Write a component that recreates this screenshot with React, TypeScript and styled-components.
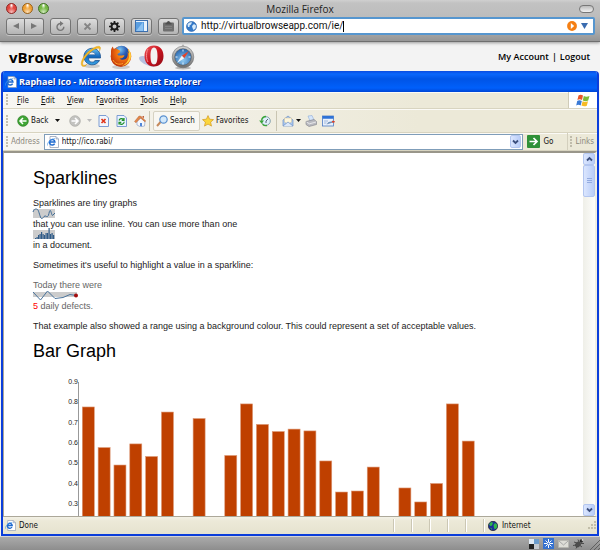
import React from "react";
import styled, { createGlobalStyle, css } from "styled-components";

const TAHOMA = `"DejaVu Sans Condensed", "DejaVu Sans", sans-serif`;
const HUMANIST = `"Open Sans", "Noto Sans", sans-serif`;
const ARIAL = `"Liberation Sans", Arial, sans-serif`;

const Global = createGlobalStyle`
  *, *::before, *::after { box-sizing: border-box; }
  body { margin: 0; background: #999; }
  button, input { font: inherit; color: inherit; margin: 0; padding: 0; border: 0; background: none; outline: 0; }
  svg { display: block; flex: none; }
  a { color: inherit; text-decoration: none; }
  h1, h2, p { margin: 0; }
`;

/* ---------- outer browser ---------- */

const Browser = styled.div`
  display: flex;
  flex-direction: column;
  height: 100vh;
  background: #f3f3f3;
  font-family: ${HUMANIST};
`;

const Chrome = styled.header`
  background: linear-gradient(#d0d0d0 0, #c2c2c2 3px, #bdbdbd 16px, #a9a9a9 32px, #979797 40px);
  border-bottom: 1px solid #6f6f6f;
  box-shadow: 0 1px 3px #999;
  position: relative;
  z-index: 1;
`;

const TitleRow = styled.div`
  display: grid;
  grid-template-columns: 1fr auto 1fr;
  align-items: center;
  height: 17px;
  padding: 0 6px;
  font-size: 10px;
  font-weight: 500;
  color: #222;
`;

const Lights = styled.div`
  display: flex;
  gap: 5px;
`;

const Light = styled.button<{ $tone: string; $edge: string }>`
  width: 11px;
  height: 11px;
  border-radius: 50%;
  border: 1px solid ${(p) => p.$edge};
  background: radial-gradient(ellipse at 50% 15%, #fff 0, transparent 35%),
    radial-gradient(circle at 50% 90%, #ffffffaa 0, transparent 50%), ${(p) => p.$tone};
`;

const Pill = styled.button`
  justify-self: end;
  width: 15px;
  height: 8px;
  border: 1px solid #777;
  border-radius: 4px;
  background: linear-gradient(#bbb, #f2f2f2);
`;

const NavRow = styled.div`
  display: flex;
  align-items: center;
  gap: 3px;
  height: 24px;
  padding: 0 5px 6px 6px;
`;

const NavGroup = styled.div`
  display: flex;
  gap: 6px;
`;

const macButton = css`
  display: flex;
  align-items: center;
  justify-content: center;
  height: 17px;
  border: 1px solid #747474;
  background: linear-gradient(#dcdcdc, #b4b4b4);
  box-shadow: 0 1px 0 #c4c4c4;
`;

const NavPair = styled.div`
  display: flex;
`;

const NavButton = styled.button<{ $join?: "left" | "right" }>`
  ${macButton}
  width: ${(p) => (p.$join ? 19 : 21)}px;
  border-radius: ${(p) => (p.$join === "left" ? "3px 0 0 3px" : p.$join === "right" ? "0 3px 3px 0" : "3px")};
  ${(p) => p.$join === "right" && "border-left: 0;"}
`;

const UrlBox = styled.label`
  display: flex;
  flex: 1;
  align-items: center;
  gap: 4px;
  height: 18px;
  padding: 0 5px 0 2px;
  border: 2px solid #5696cf;
  border-radius: 2px;
  background: #fff;
  font-family: Roboto, ${HUMANIST};
  font-size: 10px;
  color: #111;
`;

const UrlInput = styled.input`
  field-sizing: content;
  line-height: 14px;
`;

const Caret = styled.span`
  flex: none;
  width: 1px;
  height: 11px;
  margin-left: -4px;
  background: #000;
`;

const Spacer = styled.span`
  flex: 1;
`;

const IconButton = styled.button`
  display: flex;
  align-items: center;
`;

const AppBar = styled.div`
  display: flex;
  align-items: center;
  justify-content: space-between;
  height: 29px;
  padding: 0 10px 0 9px;
  color: #000;
`;

const Brand = styled.div`
  display: flex;
  align-items: center;
  gap: 6px;
  font-size: 15px;
  font-weight: 700;
  line-height: 24px;
`;

const Engines = styled.nav`
  display: flex;
  gap: 6px;
`;

const Account = styled.nav`
  display: flex;
  gap: 3px;
  font-size: 9px;
  font-weight: 600;
`;

const BrowserStatus = styled.footer`
  display: flex;
  flex: none;
  align-items: center;
  justify-content: flex-end;
  gap: 4px;
  height: 14px;
  border-top: 1px solid #d5d5d5;
  background: linear-gradient(#aaa, #8d8d8d);
`;

/* ---------- inner window ---------- */

const Window = styled.section`
  display: flex;
  flex: 1;
  flex-direction: column;
  min-height: 0;
  margin: 0 1px;
  border: solid #0b3edb;
  border-width: 0 2px 2px;
  border-radius: 4px 4px 0 0;
  background: #ece9d8;
  font-family: ${TAHOMA};
  font-size: 8px;
  color: #111;
  overflow: hidden;
`;

const WindowTitle = styled.div`
  display: flex;
  flex: none;
  align-items: center;
  gap: 2px;
  height: 21px;
  padding: 0 2px;
  background: linear-gradient(#0a4be0 0, #0a67fb 3px, #0054e6 8px, #0060fb 17px, #0046d5 21px);
  font-family: ${HUMANIST};
  font-size: 9px;
  font-weight: 700;
  color: #fff;
  text-shadow: 1px 1px 0 #0a2a8c;
`;

const Bar = styled.div<{ $h: number }>`
  display: flex;
  flex: none;
  align-items: center;
  height: ${(p) => p.$h}px;
  padding-left: 3px;
  border-bottom: 1px solid #d8d4c0;
  background: linear-gradient(90deg, #f7f6f2, #ece9d8 70%);
  box-shadow: inset 0 1px 0 #fbfaf6;
`;

const Grip = styled.span`
  flex: none;
  width: 2px;
  height: 12px;
  background: repeating-linear-gradient(#b5b1a0 0 2px, transparent 2px 3px);
  opacity: 0.8;
`;

const Menu = styled.div`
  display: flex;
  flex: 1;
  gap: 12px;
  padding-left: 9px;
`;

const Flag = styled.div`
  display: flex;
  align-items: center;
  justify-content: center;
  width: 29px;
  height: 100%;
  border-left: 1px solid #cfcbb8;
  background: #fff;
`;

const Tools = styled.div`
  display: flex;
  align-items: center;
  padding-left: 7px;
`;

const Tool = styled.button<{ $w: number; $hot?: boolean }>`
  display: flex;
  align-items: center;
  gap: 2px;
  width: ${(p) => p.$w}px;
  height: 20px;
  padding-left: 2px;
  white-space: nowrap;
  ${(p) => p.$hot && "background: #f8f7f2; border: 1px solid #d6d2c2; border-radius: 2px;"}
`;

const Rule = styled.span`
  width: 1px;
  height: 20px;
  margin-right: 3px;
  background: #c9c5b2;
`;

const AddressField = styled.label`
  display: flex;
  flex: 1;
  align-items: center;
  gap: 4px;
  color: #8b887c;
  padding-left: 3px;
`;

const AddressBox = styled.span`
  display: flex;
  flex: 1;
  align-items: center;
  gap: 3px;
  height: 16px;
  padding: 0 1px 0 2px;
  border: 1px solid #7f9db9;
  background: #fff;
  color: #111;
`;

const AddressInput = styled.input`
  flex: 1;
  min-width: 0;
`;

const blueKnob = css`
  display: flex;
  align-items: center;
  justify-content: center;
  border: 1px solid #b3c6f0;
  border-radius: 2px;
  background: linear-gradient(90deg, #dbe6fe, #b9cdf8);
`;

const DropButton = styled.button`
  ${blueKnob}
  width: 11px;
  height: 13px;
`;

const GoButton = styled.button`
  display: flex;
  align-items: center;
  gap: 4px;
  width: 40px;
  margin-left: 4px;
`;

const Links = styled.div`
  display: flex;
  align-items: center;
  gap: 4px;
  height: 100%;
  padding: 0 3px 0 2px;
  border-left: 1px solid #d3cfbd;
  color: #8b887c;
`;

const Viewport = styled.div`
  display: flex;
  flex: 1;
  min-height: 0;
  border-top: 2px solid #99968a;
  border-left: 1px solid #aca899;
  border-bottom: 1px solid #aca899;
  border-right: 2px solid #f1efe2;
  background: #fff;
`;

const Document = styled.main`
  flex: 1;
  min-width: 0;
  overflow: hidden;
  padding: 15px 29px 0;
  font-family: ${ARIAL};
  font-size: 9px;
  line-height: 10px;
  color: #1c1a22;
`;

const Heading = styled.h1`
  margin-bottom: 10px;
  font-size: 18px;
  font-weight: 400;
  line-height: 20px;
  color: #000;
`;

const Paragraph = styled.p<{ $muted?: boolean }>`
  margin-bottom: 10px;
  ${(p) => p.$muted && "color: #666;"}
  svg { height: 11px; overflow: visible; }
`;

const Alert = styled.span`
  color: #f00;
`;

const ScrollTrack = styled.div`
  display: flex;
  flex-direction: column;
  justify-content: space-between;
  width: 12px;
  background: linear-gradient(90deg, #efefe8, #fdfdfb);
`;

const ScrollButton = styled.button<{ $h: number }>`
  ${blueKnob}
  width: 12px;
  height: ${(p) => p.$h}px;
`;

const StatusBar = styled.div`
  display: flex;
  flex: none;
  align-items: center;
  height: 17px;
  background: linear-gradient(#f3f1e6, #ece9d8 4px, #e6e3cf);
`;

const StatusMain = styled.div`
  display: flex;
  flex: 1;
  align-items: center;
  gap: 3px;
  padding-left: 2px;
`;

const Pane = styled.span<{ $w: number }>`
  display: flex;
  align-items: center;
  justify-content: flex-start;
  gap: 4px;
  width: ${(p) => p.$w}px;
  height: 13px;
  padding-left: 4px;
  border-left: 1px solid #cbc7b4;
  box-shadow: inset 1px 0 0 #fff;
`;

/* ---------- icons ---------- */

const Tri = ({ dir }: { dir: "l" | "r" }) => (
  <svg width="8" height="8" viewBox="0 0 8 8">
    <path d={dir === "l" ? "M7 1v6L1 4z" : "M1 1v6l6-3z"} fill="#777" />
  </svg>
);

const DownArrow = ({ color = "#111" }: { color?: string }) => (
  <svg width="5" height="3" viewBox="0 0 5 3">
    <path d="M0 0h5L2.500 3z" fill={color} />
  </svg>
);

const Chevron = ({ up }: { up?: boolean }) => (
  <svg width="7" height="6" viewBox="0 0 7 6">
    <path d={up ? "M1 4.500l2.500-2.500L6 4.500" : "M1 1.500L3.500 4 6 1.500"} fill="none" stroke="#3c4f7d" strokeWidth="1.800" />
  </svg>
);

const Globe = () => (
  <svg width="11" height="11" viewBox="0 0 11 11">
    <circle cx="5.500" cy="5.500" r="5" fill="#3479c9" stroke="#2a5fa6" strokeWidth=".6" />
    <path d="M1.500 3.500C3 1 5 .8 6 1.500L5 3.500 3.500 4.500 3.500 6 2 6zM6 5l2-2 2 1.500-.5 3L7.500 9 6.500 7z" fill="#d8ebfb" />
  </svg>
);

const PageE = ({ size = 12 }: { size?: number }) => (
  <svg width={size} height={size} viewBox="0 0 12 12">
    <path d="M3 .5h6l2.500 2.500v8.500H3z" fill="#fff" stroke="#8a97ad" strokeWidth=".7" />
    <path d="M9 .5v2.500h2.500" fill="#cdd8ea" stroke="#8a97ad" strokeWidth=".6" />
    <path d="M7.600 7.600A2.700 2.700 0 1 1 7.900 6H2.800" fill="none" stroke="#1f6bd0" strokeWidth="1.500" />
    <path d="M.4 9.500C0 6.500 4 2.800 8 2.600" fill="none" stroke="#4b9bea" strokeWidth=".7" />
  </svg>
);

const IeLogo = () => (
  <svg width="24" height="26" viewBox="0 0 24 26">
    <defs>
      <linearGradient id="ieBlue" x1="0" y1="0" x2="0" y2="1">
        <stop offset="0" stopColor="#6cc3f2" />
        <stop offset=".5" stopColor="#1669bd" />
        <stop offset="1" stopColor="#3aa6e8" />
      </linearGradient>
    </defs>
    <ellipse cx="13" cy="22" rx="8" ry="2" fill="#ccc" />
    <path d="M20.500 16.500A8.300 8.300 0 1 1 21.500 12.500V14H9.500a3.600 3.600 0 0 0 6.600 2.500z" fill="url(#ieBlue)" stroke="#0e4585" strokeWidth=".7" />
    <path d="M9.500 10.800a3.600 3.600 0 0 1 7 0z" fill="#f3f3f3" stroke="#0e4585" strokeWidth=".5" />
    <path d="M5 22.500C-1 22.500 3.500 12 10 7c6-5 12-6.500 11.500-2.500-.2 1.200-.7 2-1.200 3C22 2.500 16.500 4 11.500 8 5.500 13 1.500 21 5 21.200c1 0 2-.5 3-1-1 1.300-2 2.300-3 2.300z" fill="#f5b822" stroke="#c88a0c" strokeWidth=".3" />
  </svg>
);

const FirefoxLogo = () => (
  <svg width="24" height="26" viewBox="0 0 24 26">
    <defs>
      <radialGradient id="foxBody" cx=".65" cy=".3" r=".8">
        <stop offset="0" stopColor="#ffb01c" />
        <stop offset=".5" stopColor="#ec6a10" />
        <stop offset="1" stopColor="#b92c08" />
      </radialGradient>
      <radialGradient id="foxGlobe" cx=".4" cy=".25" r=".8">
        <stop offset="0" stopColor="#7cc6f2" />
        <stop offset=".5" stopColor="#2a5fb8" />
        <stop offset="1" stopColor="#142e82" />
      </radialGradient>
    </defs>
    <ellipse cx="12" cy="23" rx="9" ry="2" fill="#ccc" />
    <circle cx="12" cy="12.500" r="10.300" fill="url(#foxBody)" />
    <circle cx="12.500" cy="9.500" r="7.700" fill="url(#foxGlobe)" />
    <path d="M2 7C2 5 3 3 4 2.500c0 1 .5 2 1 2.500 2-.5 3.500 0 4.500 1C11 6 11.500 7 11 8c-.5 1-2 1.500-2.500 2 0 1 1 1.500 2.500 1.500 1.500.5 3-1 4.500 0-1 2-3 3.500-5 3 2 2 6 1.500 7.500-1 1-2 1-4 .5-5.500 2 1 2.500 4 2.500 6a9 9 0 0 1-9 8.500c-6 0-10-4-10-9.500z" fill="url(#foxBody)" />
    <path d="M19 5c1.500 1 3 4 3 7 0 5-4 9-9 10 4-2 6.500-5 7-9 .2-3-.2-5.500-1-8z" fill="#ffcf3c" />
    <path d="M4 16c2 4 6 5 10 3.500" fill="none" stroke="#ffa42c" strokeWidth="1" />
  </svg>
);

const OperaLogo = () => (
  <svg width="26" height="26" viewBox="0 0 26 26">
    <defs>
      <linearGradient id="operaRed" x1="0" y1="0" x2="1" y2="1">
        <stop offset="0" stopColor="#f0555a" />
        <stop offset=".5" stopColor="#c9141f" />
        <stop offset="1" stopColor="#8f0a14" />
      </linearGradient>
    </defs>
    <path d="M8 13C4 11 0 12 0 14c0 4 8 8 15 9l1-3C12 20 10 18 8 13z" fill="#aab6dc" opacity=".85" />
    <path fillRule="evenodd" d="M15 1.500c6 0 9.500 4.500 9.500 10.500S21 22.500 15 22.500 5.500 18 5.500 12 9 1.500 15 1.500zm0 2c-2.500 0-3.500 3.500-3.500 8.500s1 8.500 3.500 8.500 3.500-3.500 3.500-8.500-1-8.500-3.500-8.500z" fill="url(#operaRed)" />
    <path d="M9 5C7 8 7 15 9 18" fill="none" stroke="#f48a8c" strokeWidth="1" />
  </svg>
);

const SafariLogo = () => (
  <svg width="24" height="26" viewBox="0 0 24 26">
    <defs>
      <linearGradient id="safariRim" x1="0" y1="0" x2="0" y2="1">
        <stop offset="0" stopColor="#d8d8d8" />
        <stop offset="1" stopColor="#6e6e6e" />
      </linearGradient>
      <radialGradient id="safariFace" cx=".5" cy=".7" r=".7">
        <stop offset="0" stopColor="#8fc9f0" />
        <stop offset="1" stopColor="#2463ad" />
      </radialGradient>
    </defs>
    <ellipse cx="12" cy="24" rx="8" ry="1.500" fill="#bbb" />
    <circle cx="12" cy="1.800" r="1.200" fill="#bbb" />
    <circle cx="12" cy="13" r="10.800" fill="url(#safariRim)" stroke="#777" strokeWidth=".6" />
    <circle cx="12" cy="13" r="8.300" fill="url(#safariFace)" stroke="#555" strokeWidth=".6" />
    <path d="M12 5.500v2M12 18.500v2M4.500 13h2M17.500 13h2" stroke="#e6f2fc" strokeWidth="1" />
    <path d="M18 7l-4.800 7.200-2.400-2.400z" fill="#e2442b" />
    <path d="M6 19l4.800-7.200 2.400 2.400z" fill="#f4f6f8" />
  </svg>
);

const ReloadIcon = () => (
  <svg width="11" height="11" viewBox="0 0 11 11">
    <path d="M8.800 5.800A3.400 3.400 0 1 1 5.800 2.600" fill="none" stroke="#777" strokeWidth="1.400" />
    <path d="M5 0l3.500 2.600L5 5.200z" fill="#777" />
  </svg>
);

const CrossIcon = () => (
  <svg width="9" height="9" viewBox="0 0 9 9">
    <path d="M1.500 1.500l6 6m0-6l-6 6" stroke="#858585" strokeWidth="1.800" />
  </svg>
);

const GearIcon = () => (
  <svg width="13" height="13" viewBox="0 0 13 13">
    <circle cx="6.500" cy="6.500" r="3" fill="none" stroke="#1c1c1c" strokeWidth="2" />
    <path d="M6.500 1v2M6.500 10v2M1 6.500h2M10 6.500h2M2.600 2.600L4 4M9 9l1.400 1.400M2.600 10.400L4 9M9 4l1.400-1.400" stroke="#1c1c1c" strokeWidth="1.700" />
  </svg>
);

const SidebarIcon = () => (
  <svg width="13" height="12" viewBox="0 0 13 12">
    <rect x=".5" y=".5" width="12" height="11" fill="#5a9ee0" stroke="#3c6fae" />
    <path d="M1 1h11v1H1zM9 2h3v9H9z" fill="#e8f2fc" />
    <path d="M1 11l7-9v9z" fill="#8cc2f2" />
  </svg>
);

const ClipboardIcon = () => (
  <svg width="13" height="12" viewBox="0 0 13 12">
    <rect x="1" y="2.500" width="11" height="9" rx="1" fill="#6f6f6f" />
    <path d="M3.500 4.500V3L5 2.500a1.500 1.500 0 0 1 3 0L9.500 3v1.500z" fill="#4f4f4f" />
    <path d="M3 6.500h7M3 8.500h7" stroke="#888" strokeWidth=".8" />
  </svg>
);

const PlayIcon = () => (
  <svg width="10" height="10" viewBox="0 0 10 10">
    <circle cx="5" cy="5" r="4.900" fill="#f57f13" />
    <path d="M3.800 2l3.400 3-3.400 3z" fill="#fff" />
  </svg>
);

const ArrowDisc = ({ back }: { back?: boolean }) => (
  <svg width="12" height="12" viewBox="0 0 12 12">
    <circle cx="6" cy="6" r="5.300" fill={back ? "#3fa535" : "#c3c3c0"} stroke={back ? "#2a7d22" : "#a9a9a5"} strokeWidth=".7" />
    <path d={back ? "M9.500 6H3.500M6 3L3 6l3 3" : "M2.500 6h6M6 3l3 3-3 3"} fill="none" stroke="#fff" strokeWidth="1.500" />
  </svg>
);

const PageIcon = ({ kind }: { kind: "stop" | "refresh" }) => (
  <svg width="11" height="12" viewBox="0 0 11 12">
    <path d="M1 .5h7L10.500 3v8.500H1z" fill={kind === "stop" ? "#f2f6fd" : "#eaf4ff"} stroke="#6f93cf" strokeWidth=".9" />
    {kind === "stop" ? (
      <path d="M3.500 4l4 4m0-4l-4 4" stroke="#e03418" strokeWidth="1.700" />
    ) : (
      <path d="M3 5.500a2.600 2.600 0 0 1 4.500-1M8 3v2.300H5.700M8.200 6.800a2.600 2.600 0 0 1-4.600 1.500M3 9.500V7.300h2.300" fill="none" stroke="#23912c" strokeWidth="1.200" />
    )}
  </svg>
);

const HomeIcon = () => (
  <svg width="12" height="12" viewBox="0 0 12 12">
    <path d="M3 6l4-3 4 3.500-.5 4.500-4 .8L3 10z" fill="#f6f8fc" stroke="#7f96c4" strokeWidth=".6" />
    <path d="M.5 6.500L5 1l2 .3L11.800 6l-1 .7L6.500 3 2 7.800z" fill="#e2884a" stroke="#a8552a" strokeWidth=".4" />
    <path d="M6 8h2v3.300H6z" fill="#4f86d8" />
    <path d="M8.500 1h1.500v2.300L8.500 2z" fill="#c25c38" />
  </svg>
);

const SearchIcon = () => (
  <svg width="12" height="12" viewBox="0 0 12 12">
    <path d="M1 11l4-4.500" stroke="#c58a5c" strokeWidth="2" />
    <circle cx="7.500" cy="4.500" r="3.700" fill="#d3e9fb" stroke="#5b91cf" strokeWidth="1.200" />
  </svg>
);

const StarIcon = () => (
  <svg width="12" height="12" viewBox="0 0 12 12">
    <path d="M6 .6l1.600 3.600 3.900.4-2.900 2.600.9 3.900L6 9.100l-3.500 2 .9-3.900L.5 4.600l3.900-.4z" fill="#fbd63c" stroke="#d39a1c" strokeWidth=".7" />
  </svg>
);

const HistoryIcon = () => (
  <svg width="12" height="12" viewBox="0 0 12 12">
    <circle cx="7" cy="6" r="4.300" fill="#dff0fa" stroke="#7d9aa8" strokeWidth=".9" />
    <path d="M7 6l2-2M7 6v2" stroke="#456" strokeWidth=".9" />
    <path d="M7 1.500A4.500 4.500 0 0 0 2.600 5.500" fill="none" stroke="#3aa63a" strokeWidth="1.300" />
    <path d="M.2 5.500h4.800L2.600 8.800z" fill="#3aa63a" />
    <path d="M3.500 9.300A4.700 4.700 0 0 0 8 10.500" fill="none" stroke="#3aa63a" strokeWidth="1.300" />
  </svg>
);

const MailIcon = () => (
  <svg width="12" height="12" viewBox="0 0 12 12">
    <path d="M1 5l5-4 5 4v6H1z" fill="#a9c8ee" stroke="#6e8fc4" strokeWidth=".7" />
    <path d="M2.500 3h7v4L6 9 2.500 7z" fill="#fdf6dc" stroke="#c9b98a" strokeWidth=".4" />
    <path d="M1 11l5-4 5 4" fill="#dbe8f9" stroke="#6e8fc4" strokeWidth=".7" />
  </svg>
);

const PrintIcon = () => (
  <svg width="12" height="12" viewBox="0 0 12 12">
    <path d="M3 1l4-.5L9 5 5 6z" fill="#d5e6fb" stroke="#7fa0d4" strokeWidth=".5" />
    <path d="M1 6.500L9 4.500l2.500 2v3L4 11.500 1 9.500z" fill="#b9bac0" stroke="#7d7f88" strokeWidth=".6" />
    <path d="M1.500 7l3 1.800L11 7" fill="none" stroke="#f1f1f4" strokeWidth=".8" />
  </svg>
);

const EditIcon = () => (
  <svg width="13" height="12" viewBox="0 0 13 12">
    <rect x=".5" y="1" width="11" height="10" fill="#e9f0fb" stroke="#4b7ac4" strokeWidth=".8" />
    <path d="M.5 1h11v2.800H.5z" fill="#2e72d6" />
    <path d="M2 6h4M2 8h2.500" stroke="#8aa9d6" strokeWidth=".8" />
    <path d="M4.500 9.500l2-2.500 4-.8.300 1.400z" fill="#6c8fb8" />
    <path d="M10 5.800l2.800.2-.3 1.600-2.300.2z" fill="#d8422a" />
  </svg>
);

const FlagIcon = () => (
  <svg width="15" height="13" viewBox="0 0 15 13">
    <path d="M2.500 1.500C4 .6 5.500.7 7 1.600L6 6C4.500 5.200 3 5.100 1.400 6z" fill="#e9552a" />
    <path d="M7.800 2c1.800 1 3.500 1 5.700 0l-1.300 4.500c-1.800.9-3.600.8-5.400-.1z" fill="#7dbb38" />
    <path d="M1.200 6.900c1.500-.9 3-.8 4.600 0l-1.100 4.500c-1.500-.9-3-.9-4.500 0z" fill="#3a7ad6" />
    <path d="M6.600 7.300c1.800.9 3.500.9 5.400 0l-1.200 4.400c-1.800.9-3.500.8-5.300-.1z" fill="#f7bb25" />
  </svg>
);

const GoIcon = () => (
  <svg width="13" height="13" viewBox="0 0 13 13">
    <rect width="13" height="13" rx="1" fill="#2f9138" />
    <path d="M2.500 6.500h7M6.500 3l3.500 3.500L6.500 10" fill="none" stroke="#fff" strokeWidth="1.700" />
  </svg>
);

const EarthIcon = () => (
  <svg width="10" height="10" viewBox="0 0 10 10">
    <circle cx="5" cy="5" r="4.700" fill="#1b2f9a" stroke="#111" strokeWidth=".6" />
    <path d="M1 3.500L3 1l2 .8L4 4.500 2.500 5zM5.500 4L7 2l2 1.500v3L7 8.500 6 7z M2 6.500l2 1v1.500z" fill="#2eb64a" />
  </svg>
);

const SizeGrip = () => (
  <svg width="9" height="9" viewBox="0 0 9 9">
    <path d="M6 0h2v2H6zM6 3h2v2H6zM3 3h2v2H3zM0 6h2v2H0zM3 6h2v2H3zM6 6h2v2H6z" fill="#c2bea9" />
  </svg>
);

const TilesIcon = () => (
  <svg width="10" height="10" viewBox="0 0 10 10">
    <path d="M0 0h5v5H0z" fill="#dfe9f3" /><path d="M5 0h5v5H5z" fill="#6b9ccc" />
    <path d="M0 5h5v5H0z" fill="#222" /><path d="M5 5h5v5H5z" fill="#c4c9cf" />
  </svg>
);

const FlakeIcon = () => (
  <svg width="11" height="11" viewBox="0 0 11 11">
    <rect width="11" height="11" fill="#3471d0" />
    <path d="M5.500 1v9M1 5.500h9M2.500 2.500l6 6M8.500 2.500l-6 6" stroke="#fff" strokeWidth="1" />
    <circle cx="5.500" cy="5.500" r="1.100" fill="#3471d0" />
  </svg>
);

const EnvelopeIcon = () => (
  <svg width="11" height="10" viewBox="0 0 11 10">
    <rect x=".5" y="1.500" width="10" height="7" fill="#deded8" stroke="#b5b5ad" strokeWidth=".6" />
    <path d="M1 2l4.500 4L10 2" fill="none" stroke="#999" strokeWidth=".8" />
  </svg>
);

const BugIcon = () => (
  <svg width="12" height="11" viewBox="0 0 12 11">
    <ellipse cx="5" cy="6.500" rx="2.500" ry="3.200" transform="rotate(45 5 6.500)" fill="#4c4c4c" />
    <circle cx="8.300" cy="3" r="1.700" fill="#2d2d2d" />
    <circle cx="9.500" cy="2" r=".8" fill="#fff" />
    <path d="M1 4l3 1M0 7.500l3-.5M3 10.500L4 8.500M5 1.500L6 4M11 5.500L8 5.500M9 9L7 7.500" stroke="#444" strokeWidth=".9" />
  </svg>
);

const CornerGrip = () => (
  <svg width="11" height="12" viewBox="0 0 11 12">
    <path d="M1 12L11 2M5 12l6-6M9 12l2-2" stroke="#5f5f5f" strokeWidth="1" />
  </svg>
);

/* ---------- document graphics ---------- */

const WaveSpark = () => (
  <svg width="22" height="11" viewBox="0 0 22 11">
    <rect y="1" width="22" height="9" fill="#ccc" />
    <path d="M0 4C1 1 3 .5 4.500 1.500S7 10 8.500 10.500s2-2.500 3.500-2.500 1 .8 2.500.5S16 3 17 2.500 18.500 7 19.500 7.500L22 5" fill="none" stroke="#3e6a94" />
  </svg>
);

const sparkBars = [1, 2, 4, 5, 7, 5, 4, 6, 6, 11, 5, 6, 4];
const BarSpark = () => (
  <svg width="22" height="11" viewBox="0 0 22 11">
    <rect y="1" width="22" height="9" fill="#ccc" />
    {sparkBars.map((h, i) => (
      <rect key={i} x={2 + i * 1.5} y={10 - h} width="1.200" height={h} fill="#2f5b88" />
    ))}
  </svg>
);

const RangeSpark = () => (
  <svg width="44" height="11" viewBox="0 0 44 11">
    <rect y="2" width="44" height="5" fill="#ccc" />
    <path d="M0 2l7.500 8L14.500 1 22 8.500l8-1L37 4.500l6 1" fill="none" stroke="#4a739b" />
    <circle cx="43" cy="5.500" r="2" fill="#a30d0d" />
  </svg>
);

const values = [
  0.777, 0.577, 0.491, 0.595, 0.533, 0.752, 0, 0.72, 0, 0.538, 0.792, 0.691, 0.656, 0.668, 0.659, 0.511, 0.358,
  0.363, 0.481, 0, 0.378, 0.309, 0.4, 0.792, 0.609,
];
const ticks = [0.9, 0.8, 0.7, 0.6, 0.5, 0.4, 0.3];
const SCALE = 203;
const yOf = (v: number) => 8 + (0.9 - v) * SCALE;

const ChartBox = styled.figure`
  margin: 0;
  padding: 3px 0 0 32px;
  text { font: 7px ${ARIAL}; fill: #222; text-anchor: end; }
`;

const BarChart = () => (
  <ChartBox>
    <svg width="420" height="196" viewBox="0 0 420 196" role="img" aria-label="Bar graph">
      <path d="M13.500 8V191" stroke="#999" />
      {ticks.map((t) => (
        <text key={t} x="13" y={yOf(t) + 2}>{t.toFixed(1)}</text>
      ))}
      {values.map((v, i) =>
        v ? (
          <rect key={i} x={17.3 + i * 15.83} y={yOf(v)} width="12" height={v * SCALE} fill="#bf4000" stroke="#dd9a78" strokeWidth=".6" />
        ) : null
      )}
    </svg>
  </ChartBox>
);

export default function App() {
  return (
    <Browser>
      <Global />
      <Chrome>
        <TitleRow>
          <Lights>
            <Light aria-label="Close" $tone="#e2463f" $edge="#8d2b28" />
            <Light aria-label="Minimize" $tone="#f0a032" $edge="#98611d" />
            <Light aria-label="Zoom" $tone="#76b944" $edge="#44702a" />
          </Lights>
          <span>Mozilla Firefox</span>
          <Pill aria-label="Toggle toolbar" />
        </TitleRow>
        <NavRow>
          <NavGroup>
            <NavPair>
              <NavButton $join="left" aria-label="Back"><Tri dir="l" /></NavButton>
              <NavButton $join="right" aria-label="Forward"><Tri dir="r" /></NavButton>
            </NavPair>
            <NavButton aria-label="Reload"><ReloadIcon /></NavButton>
            <NavButton aria-label="Stop"><CrossIcon /></NavButton>
            <NavButton aria-label="Settings"><GearIcon /></NavButton>
            <NavButton aria-label="Sidebar"><SidebarIcon /></NavButton>
            <NavButton aria-label="Clipboard"><ClipboardIcon /></NavButton>
          </NavGroup>
          <UrlBox>
            <Globe />
            <UrlInput aria-label="Location" defaultValue="http://virtualbrowseapp.com/ie/" />
            <Caret />
            <Spacer />
            <IconButton aria-label="Load"><PlayIcon /></IconButton>
            <IconButton aria-label="Recent locations">
              <svg width="7" height="6" viewBox="0 0 7 6"><path d="M0 0h7L3.500 6z" fill="#3a6cb0" /></svg>
            </IconButton>
          </UrlBox>
        </NavRow>
      </Chrome>

      <AppBar>
        <Brand>
          vBrowse
          <Engines>
            <a href="#ie" aria-label="Internet Explorer"><IeLogo /></a>
            <a href="#firefox" aria-label="Firefox"><FirefoxLogo /></a>
            <a href="#opera" aria-label="Opera"><OperaLogo /></a>
            <a href="#safari" aria-label="Safari"><SafariLogo /></a>
          </Engines>
        </Brand>
        <Account>
          <a href="#account">My Account</a>
          <span>|</span>
          <a href="#logout">Logout</a>
        </Account>
      </AppBar>

      <Window>
        <WindowTitle><PageE />Raphael Ico - Microsoft Internet Explorer</WindowTitle>
        <Bar $h={17}>
          <Grip />
          <Menu>
            <button><u>F</u>ile</button>
            <button><u>E</u>dit</button>
            <button><u>V</u>iew</button>
            <button>F<u>a</u>vorites</button>
            <button><u>T</u>ools</button>
            <button><u>H</u>elp</button>
          </Menu>
          <Flag><FlagIcon /></Flag>
        </Bar>
        <Bar $h={24}>
          <Grip />
          <Tools>
            <Tool $w={38}><ArrowDisc back />Back</Tool>
            <Tool $w={14} aria-label="Back history"><DownArrow /></Tool>
            <Tool $w={18} aria-label="Forward"><ArrowDisc /></Tool>
            <Tool $w={11} aria-label="Forward history"><DownArrow color="#bbb" /></Tool>
            <Tool $w={18} aria-label="Stop"><PageIcon kind="stop" /></Tool>
            <Tool $w={18} aria-label="Refresh"><PageIcon kind="refresh" /></Tool>
            <Tool $w={17} aria-label="Home"><HomeIcon /></Tool>
            <Rule />
            <Tool $w={47} $hot><SearchIcon />Search</Tool>
            <Tool $w={57}><StarIcon />Favorites</Tool>
            <Tool $w={19} aria-label="History"><HistoryIcon /></Tool>
            <Rule />
            <Tool $w={23} aria-label="Mail"><MailIcon /><DownArrow /></Tool>
            <Tool $w={17} aria-label="Print"><PrintIcon /></Tool>
            <Tool $w={17} aria-label="Edit"><EditIcon /></Tool>
          </Tools>
        </Bar>
        <Bar $h={18}>
          <Grip />
          <AddressField>
            Address
            <AddressBox>
              <PageE />
              <AddressInput defaultValue="http://ico.rabi/" />
              <DropButton aria-label="Address list"><Chevron /></DropButton>
            </AddressBox>
          </AddressField>
          <GoButton><GoIcon />Go</GoButton>
          <Links><Grip />Links</Links>
        </Bar>

        <Viewport>
          <Document>
            <Heading>Sparklines</Heading>
            <Paragraph>
              Sparklines are tiny graphs <WaveSpark />
              that you can use inline. You can use more than one <BarSpark />
              in a document.
            </Paragraph>
            <Paragraph>Sometimes it's useful to highlight a value in a sparkline:</Paragraph>
            <Paragraph $muted>
              Today there were <RangeSpark />
              <Alert>5</Alert> daily defects.
            </Paragraph>
            <Paragraph>
              That example also showed a range using a background colour. This could represent a set of acceptable values.
            </Paragraph>
            <Heading as="h2">Bar Graph</Heading>
            <BarChart />
          </Document>
          <ScrollTrack>
            <div>
              <ScrollButton $h={12} aria-label="Scroll up"><Chevron up /></ScrollButton>
              <ScrollButton $h={32} aria-label="Scroll position">
                <svg width="5" height="6" viewBox="0 0 5 6"><path d="M0 .5h5M0 2.500h5M0 4.500h5" stroke="#93abe0" /></svg>
              </ScrollButton>
            </div>
            <ScrollButton $h={12} aria-label="Scroll down"><Chevron /></ScrollButton>
          </ScrollTrack>
        </Viewport>

        <StatusBar>
          <StatusMain><PageE size={11} />Done</StatusMain>
          <Pane $w={18} />
          <Pane $w={18} />
          <Pane $w={18} />
          <Pane $w={18} />
          <Pane $w={18} />
          <Pane $w={105}><EarthIcon />Internet</Pane>
          <SizeGrip />
        </StatusBar>
      </Window>

      <BrowserStatus>
        <TilesIcon />
        <FlakeIcon />
        <EnvelopeIcon />
        <BugIcon />
        <CornerGrip />
      </BrowserStatus>
    </Browser>
  );
}
